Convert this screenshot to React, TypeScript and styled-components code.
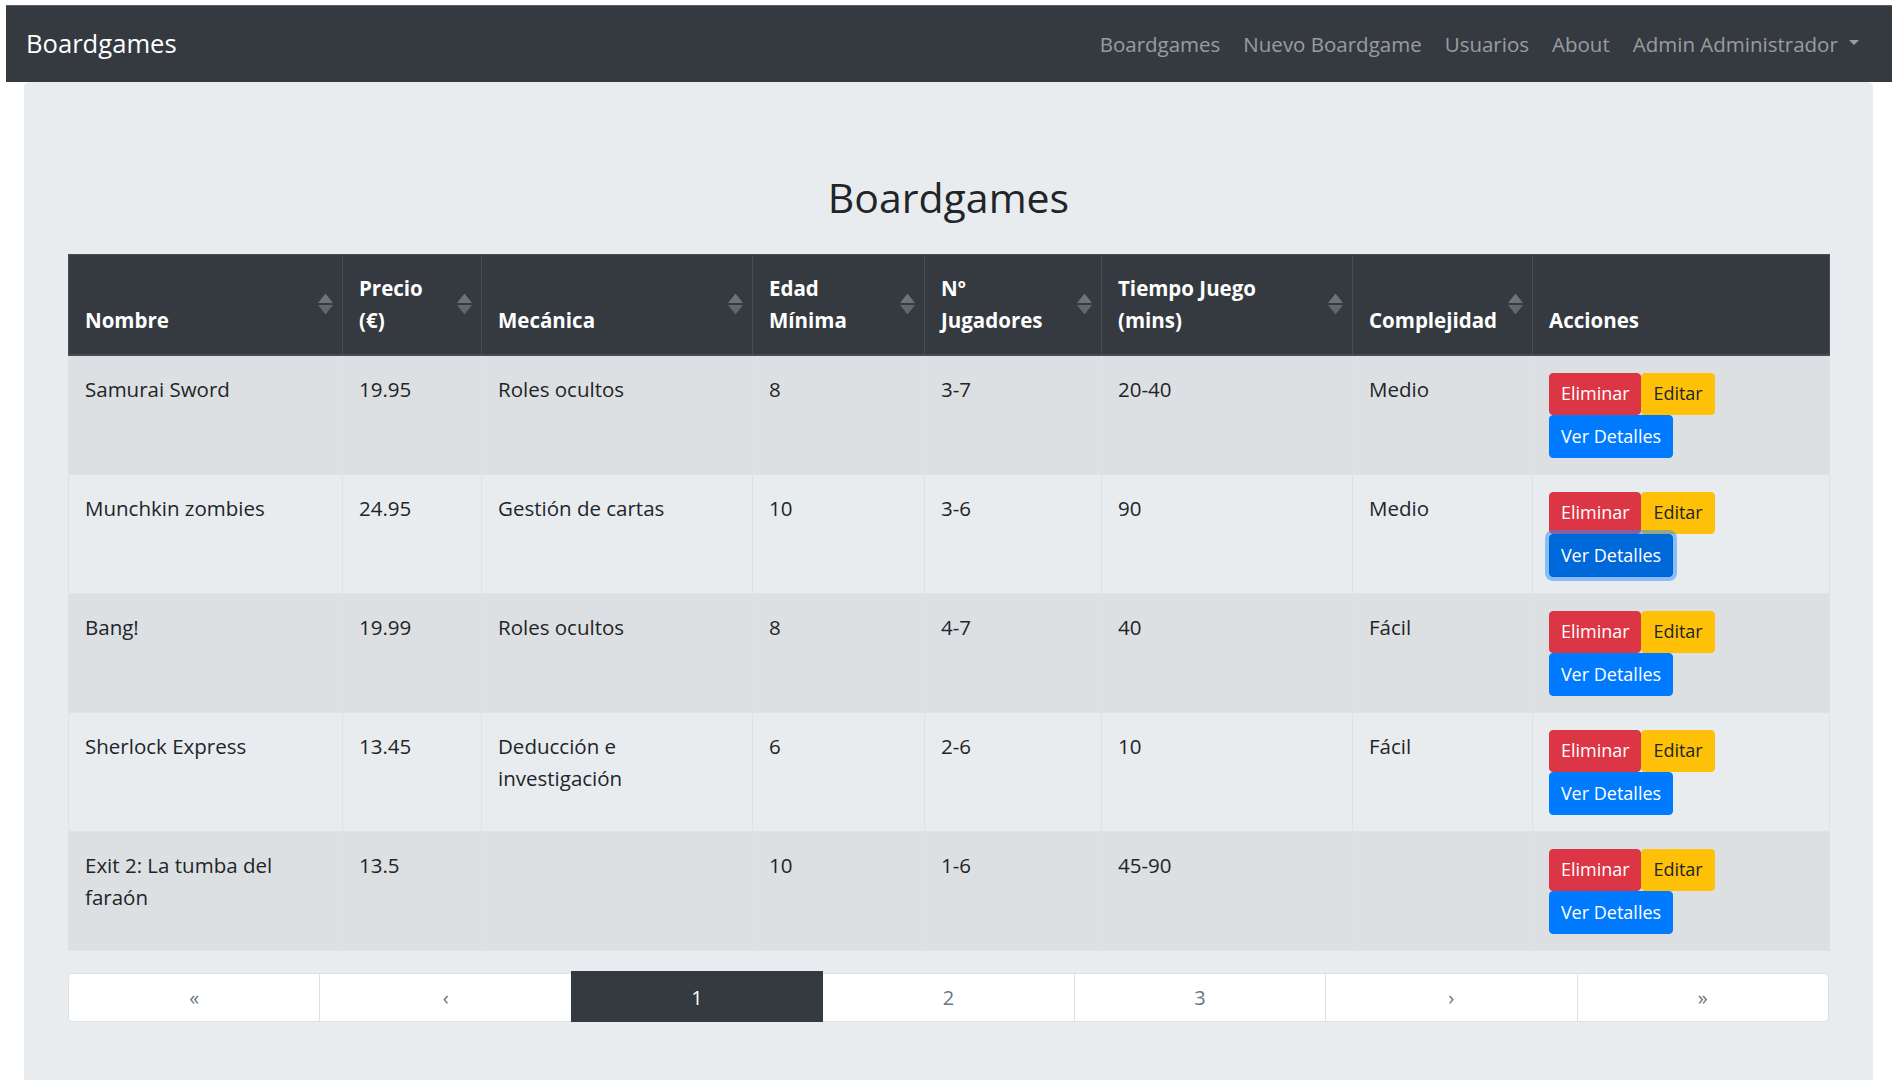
import React from "react";
import styled, { createGlobalStyle, css } from "styled-components";

const GlobalStyle = createGlobalStyle`
  html, body {
    margin: 0;
    background: #ffffff;
  }
  body {
    padding: 5px 9px 0 6px;
    font-family: "Open Sans", "Noto Sans", sans-serif;
    font-size: 20.5px;
    line-height: 32.6px;
    color: #212529;
  }
  * { box-sizing: border-box; }
`;

type Game = {
  nombre: string;
  precio: string;
  mecanica: string;
  edad: string;
  jugadores: string;
  tiempo: string;
  complejidad: string;
};

const games: Game[] = [
  { nombre: "Samurai Sword", precio: "19.95", mecanica: "Roles ocultos", edad: "8", jugadores: "3-7", tiempo: "20-40", complejidad: "Medio" },
  { nombre: "Munchkin zombies", precio: "24.95", mecanica: "Gestión de cartas", edad: "10", jugadores: "3-6", tiempo: "90", complejidad: "Medio" },
  { nombre: "Bang!", precio: "19.99", mecanica: "Roles ocultos", edad: "8", jugadores: "4-7", tiempo: "40", complejidad: "Fácil" },
  { nombre: "Sherlock Express", precio: "13.45", mecanica: "Deducción e investigación", edad: "6", jugadores: "2-6", tiempo: "10", complejidad: "Fácil" },
  { nombre: "Exit 2: La tumba del faraón", precio: "13.5", mecanica: "", edad: "10", jugadores: "1-6", tiempo: "45-90", complejidad: "" },
];

type Column = { label: string[]; width: number; sortable: boolean };

const columns: Column[] = [
  { label: ["Nombre"], width: 274, sortable: true },
  { label: ["Precio", "(€)"], width: 139, sortable: true },
  { label: ["Mecánica"], width: 271, sortable: true },
  { label: ["Edad", "Mínima"], width: 172, sortable: true },
  { label: ["Nº", "Jugadores"], width: 177, sortable: true },
  { label: ["Tiempo Juego", "(mins)"], width: 251, sortable: true },
  { label: ["Complejidad"], width: 180, sortable: true },
  { label: ["Acciones"], width: 297, sortable: false },
];

const pages = ["«", "‹", "1", "2", "3", "›", "»"];

/* ---------- Navbar ---------- */

const Navbar = styled.nav`
  display: flex;
  align-items: center;
  justify-content: space-between;
  height: 77px;
  padding: 0 21.7px 0 20px;
  background: #343a40;
  border-top: 1px solid #5b6066;
`;

const Brand = styled.a`
  color: #ffffff;
  font-size: 25.6px;
  line-height: 40.7px;
  text-decoration: none;
`;

const NavList = styled.ul`
  display: flex;
  align-items: center;
  list-style: none;
  margin: 0;
  padding: 0;
`;

const NavLink = styled.a`
  display: flex;
  align-items: center;
  padding: 0 11.5px;
  color: rgba(255, 255, 255, 0.5);
  font-size: 20.5px;
  line-height: 32.6px;
  text-decoration: none;
`;

const Caret = styled.span`
  display: inline-block;
  width: 0;
  height: 0;
  margin-left: 11px;
  margin-top: -4px;
  border-top: 5.5px solid rgba(255, 255, 255, 0.5);
  border-left: 5.5px solid transparent;
  border-right: 5.5px solid transparent;
`;

/* ---------- Main panel ---------- */

const Jumbotron = styled.main`
  margin: 0 19px 0 18px;
  padding: 89px 44px 87px;
  background: #e9ecef;
  border-radius: 5px 5px 0 0;
`;

const Title = styled.h2`
  margin: 0 0 31px;
  text-align: center;
  font-size: 41px;
  line-height: 52px;
  font-weight: 400;
  color: #212529;
`;

/* ---------- Table ---------- */

const Table = styled.table`
  width: 100%;
  table-layout: fixed;
  border-collapse: collapse;
  color: #212529;
`;

const HeadCell = styled.th<{ $sortable: boolean }>`
  position: relative;
  padding: 16.8px ${(p) => (p.$sortable ? "41px" : "16px")} 16.8px 16px;
  background: #343a40;
  color: #ffffff;
  font-weight: 700;
  text-align: left;
  vertical-align: bottom;
  line-height: 32.6px;
  border: 1px solid #454d55;
  border-bottom: 2px solid #454d55;
  white-space: nowrap;
`;

const HeadLine = styled.span`
  display: block;
`;

const SortIcon = styled.svg`
  position: absolute;
  right: 9px;
  top: 50%;
  width: 15px;
  height: 21px;
  transform: translateY(-50%);
`;

const Row = styled.tr<{ $striped: boolean }>`
  background: ${(p) => (p.$striped ? "rgba(0, 0, 0, 0.05)" : "transparent")};
`;

const Cell = styled.td`
  padding: 17px 16px 16px;
  vertical-align: top;
  border: 1px solid #dee2e6;
  line-height: 32.6px;
`;

const ActionStack = styled.div`
  display: flex;
  flex-direction: column;
  align-items: flex-start;
`;

const ActionPair = styled.div`
  display: flex;
`;

type Variant = "danger" | "warning" | "primary";

const variantStyles: Record<Variant, ReturnType<typeof css>> = {
  danger: css`
    background: #dc3545;
    border-color: #dc3545;
    color: #ffffff;
  `,
  warning: css`
    background: #ffc107;
    border-color: #ffc107;
    color: #212529;
  `,
  primary: css`
    background: #007bff;
    border-color: #007bff;
    color: #ffffff;
  `,
};

const ActionButton = styled.button<{ $variant: Variant; $focused?: boolean }>`
  font-family: inherit;
  font-size: 18px;
  line-height: 29.5px;
  padding: 5.5px 10.9px;
  border: 1px solid transparent;
  border-radius: 4px;
  cursor: pointer;
  ${(p) => variantStyles[p.$variant]}
  ${(p) =>
    p.$focused &&
    css`
      background: #0069d9;
      border-color: #0062cc;
      box-shadow: 0 0 0 4px rgba(38, 143, 255, 0.5);
    `}
`;

/* ---------- Pagination ---------- */

const Pager = styled.ul`
  display: flex;
  list-style: none;
  margin: 22.6px 0 0;
  padding: 0;
`;

const PageItem = styled.li`
  flex: 1;
  margin-left: -1px;
  &:first-child {
    margin-left: 0;
  }
  &:first-child a {
    border-radius: 5px 0 0 5px;
  }
  &:last-child a {
    border-radius: 0 5px 5px 0;
  }
`;

const PageLink = styled.a<{ $active: boolean }>`
  position: relative;
  display: block;
  padding: 10px 0;
  text-align: center;
  font-size: 20px;
  line-height: 27px;
  background: #ffffff;
  color: #6c757d;
  border: 1px solid #dee2e6;
  text-decoration: none;
  ${(p) =>
    p.$active &&
    css`
      z-index: 1;
      margin-top: -2px;
      padding-top: 12px;
      background: #343a40;
      border-color: #343a40;
      color: #ffffff;
    `}
`;

const SortGlyph = () => (
  <SortIcon viewBox="0 0 15 21">
    <polygon points="7.5,0 15,9.5 0,9.5" fill="#6f7378" />
    <polygon points="0,11.5 15,11.5 7.5,21" fill="#63676c" />
  </SortIcon>
);

export default function App() {
  return (
    <>
      <GlobalStyle />
      <Navbar>
        <Brand href="#">Boardgames</Brand>
        <NavList>
          <li><NavLink href="#">Boardgames</NavLink></li>
          <li><NavLink href="#">Nuevo Boardgame</NavLink></li>
          <li><NavLink href="#">Usuarios</NavLink></li>
          <li><NavLink href="#">About</NavLink></li>
          <li>
            <NavLink href="#">
              Admin Administrador
              <Caret />
            </NavLink>
          </li>
        </NavList>
      </Navbar>
      <Jumbotron>
        <Title>Boardgames</Title>
        <Table>
          <colgroup>
            {columns.map((c, i) => (
              <col key={i} style={{ width: c.width }} />
            ))}
          </colgroup>
          <thead>
            <tr>
              {columns.map((c, i) => (
                <HeadCell key={i} $sortable={c.sortable}>
                  {c.label.map((l, j) => (
                    <HeadLine key={j}>{l}</HeadLine>
                  ))}
                  {c.sortable && <SortGlyph />}
                </HeadCell>
              ))}
            </tr>
          </thead>
          <tbody>
            {games.map((g, i) => (
              <Row key={i} $striped={i % 2 === 0}>
                <Cell>{g.nombre}</Cell>
                <Cell>{g.precio}</Cell>
                <Cell>{g.mecanica}</Cell>
                <Cell>{g.edad}</Cell>
                <Cell>{g.jugadores}</Cell>
                <Cell>{g.tiempo}</Cell>
                <Cell>{g.complejidad}</Cell>
                <Cell>
                  <ActionStack>
                    <ActionPair>
                      <ActionButton $variant="danger">Eliminar</ActionButton>
                      <ActionButton $variant="warning">Editar</ActionButton>
                    </ActionPair>
                    <ActionButton $variant="primary" $focused={i === 1}>
                      Ver Detalles
                    </ActionButton>
                  </ActionStack>
                </Cell>
              </Row>
            ))}
          </tbody>
        </Table>
        <Pager>
          {pages.map((p) => (
            <PageItem key={p}>
              <PageLink href="#" $active={p === "1"}>
                {p}
              </PageLink>
            </PageItem>
          ))}
        </Pager>
      </Jumbotron>
    </>
  );
}
